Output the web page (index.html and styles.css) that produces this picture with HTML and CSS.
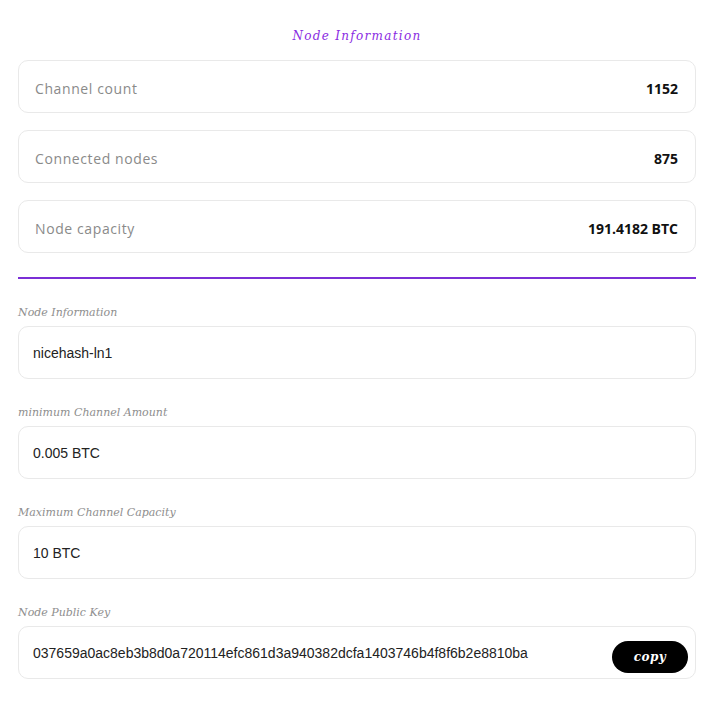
FILE: index.html
```html
<!DOCTYPE html>
<html>
<head>
<meta charset="utf-8">
<link rel="stylesheet" href="styles.css">
</head>
<body>
<div class="wrap">
  <h1 class="title">Node Information</h1>
  <div class="stats">
    <div class="stat"><span class="stat-label">Channel count</span><span class="stat-value">1152</span></div>
    <div class="stat"><span class="stat-label">Connected nodes</span><span class="stat-value">875</span></div>
    <div class="stat"><span class="stat-label">Node capacity</span><span class="stat-value">191.4182 BTC</span></div>
  </div>
  <div class="divider"></div>
  <div class="fields">
    <div class="field">
      <div class="field-label">Node Information</div>
      <div class="field-box">nicehash-ln1</div>
    </div>
    <div class="field">
      <div class="field-label">minimum Channel Amount</div>
      <div class="field-box">0.005 BTC</div>
    </div>
    <div class="field">
      <div class="field-label">Maximum Channel Capacity</div>
      <div class="field-box">10 BTC</div>
    </div>
    <div class="field">
      <div class="field-label">Node Public Key</div>
      <div class="field-box key-box"><span>037659a0ac8eb3b8d0a720114efc861d3a940382dcfa1403746b4f8f6b2e8810ba</span><button class="copy">copy</button></div>
    </div>
  </div>
</div>
</body>
</html>
```
FILE: styles.css
```css
html, body { margin: 0; padding: 0; background: #fff; }
.wrap { width: 678px; margin-left: 18px; padding-top: 28px; }
.title {
  margin: 0 0 15px;
  text-align: center;
  font-family: "DejaVu Serif", "Liberation Serif", serif;
  font-style: italic;
  font-weight: normal;
  font-size: 12px;
  letter-spacing: 1.3px;
  color: #8a2be2;
  line-height: 17px;
}
.stats { display: flex; flex-direction: column; gap: 17px; }
.stat {
  height: 53px;
  box-sizing: border-box;
  border: 1px solid #e9e9e9;
  border-radius: 10px;
  display: flex;
  align-items: center;
  justify-content: space-between;
  padding: 4px 17px 0 16px;
  font-family: "Open Sans", sans-serif;
}
.stat-label { font-size: 14px; color: #8a8a8a; letter-spacing: 0.6px; }
.stat-value { font-size: 14px; font-weight: 700; color: #111; }
.divider { height: 2px; background: #7b2fd6; margin-top: 24px; }
.fields { display: flex; flex-direction: column; gap: 27px; padding-top: 27px; }
.field-label {
  font-family: "DejaVu Serif", "Liberation Serif", serif;
  font-style: italic;
  font-size: 11px;
  color: #8e8e8e;
  line-height: 14px;
  margin-bottom: 6px;
}
.field-box {
  height: 53px;
  box-sizing: border-box;
  border: 1px solid #e9e9e9;
  border-radius: 10px;
  display: flex;
  align-items: center;
  justify-content: space-between;
  padding: 0 7px 0 14px;
  font-family: "Liberation Sans", Arial, sans-serif;
  font-size: 14px;
  color: #222;
}
.copy {
  width: 76px;
  height: 32px;
  border: none;
  border-radius: 16px;
  background: #000;
  color: #fff;
  font-family: "DejaVu Serif", "Liberation Serif", serif;
  font-style: italic;
  font-weight: bold;
  font-size: 12px;
  letter-spacing: 0.5px;
  margin-top: 9px;
}
```
